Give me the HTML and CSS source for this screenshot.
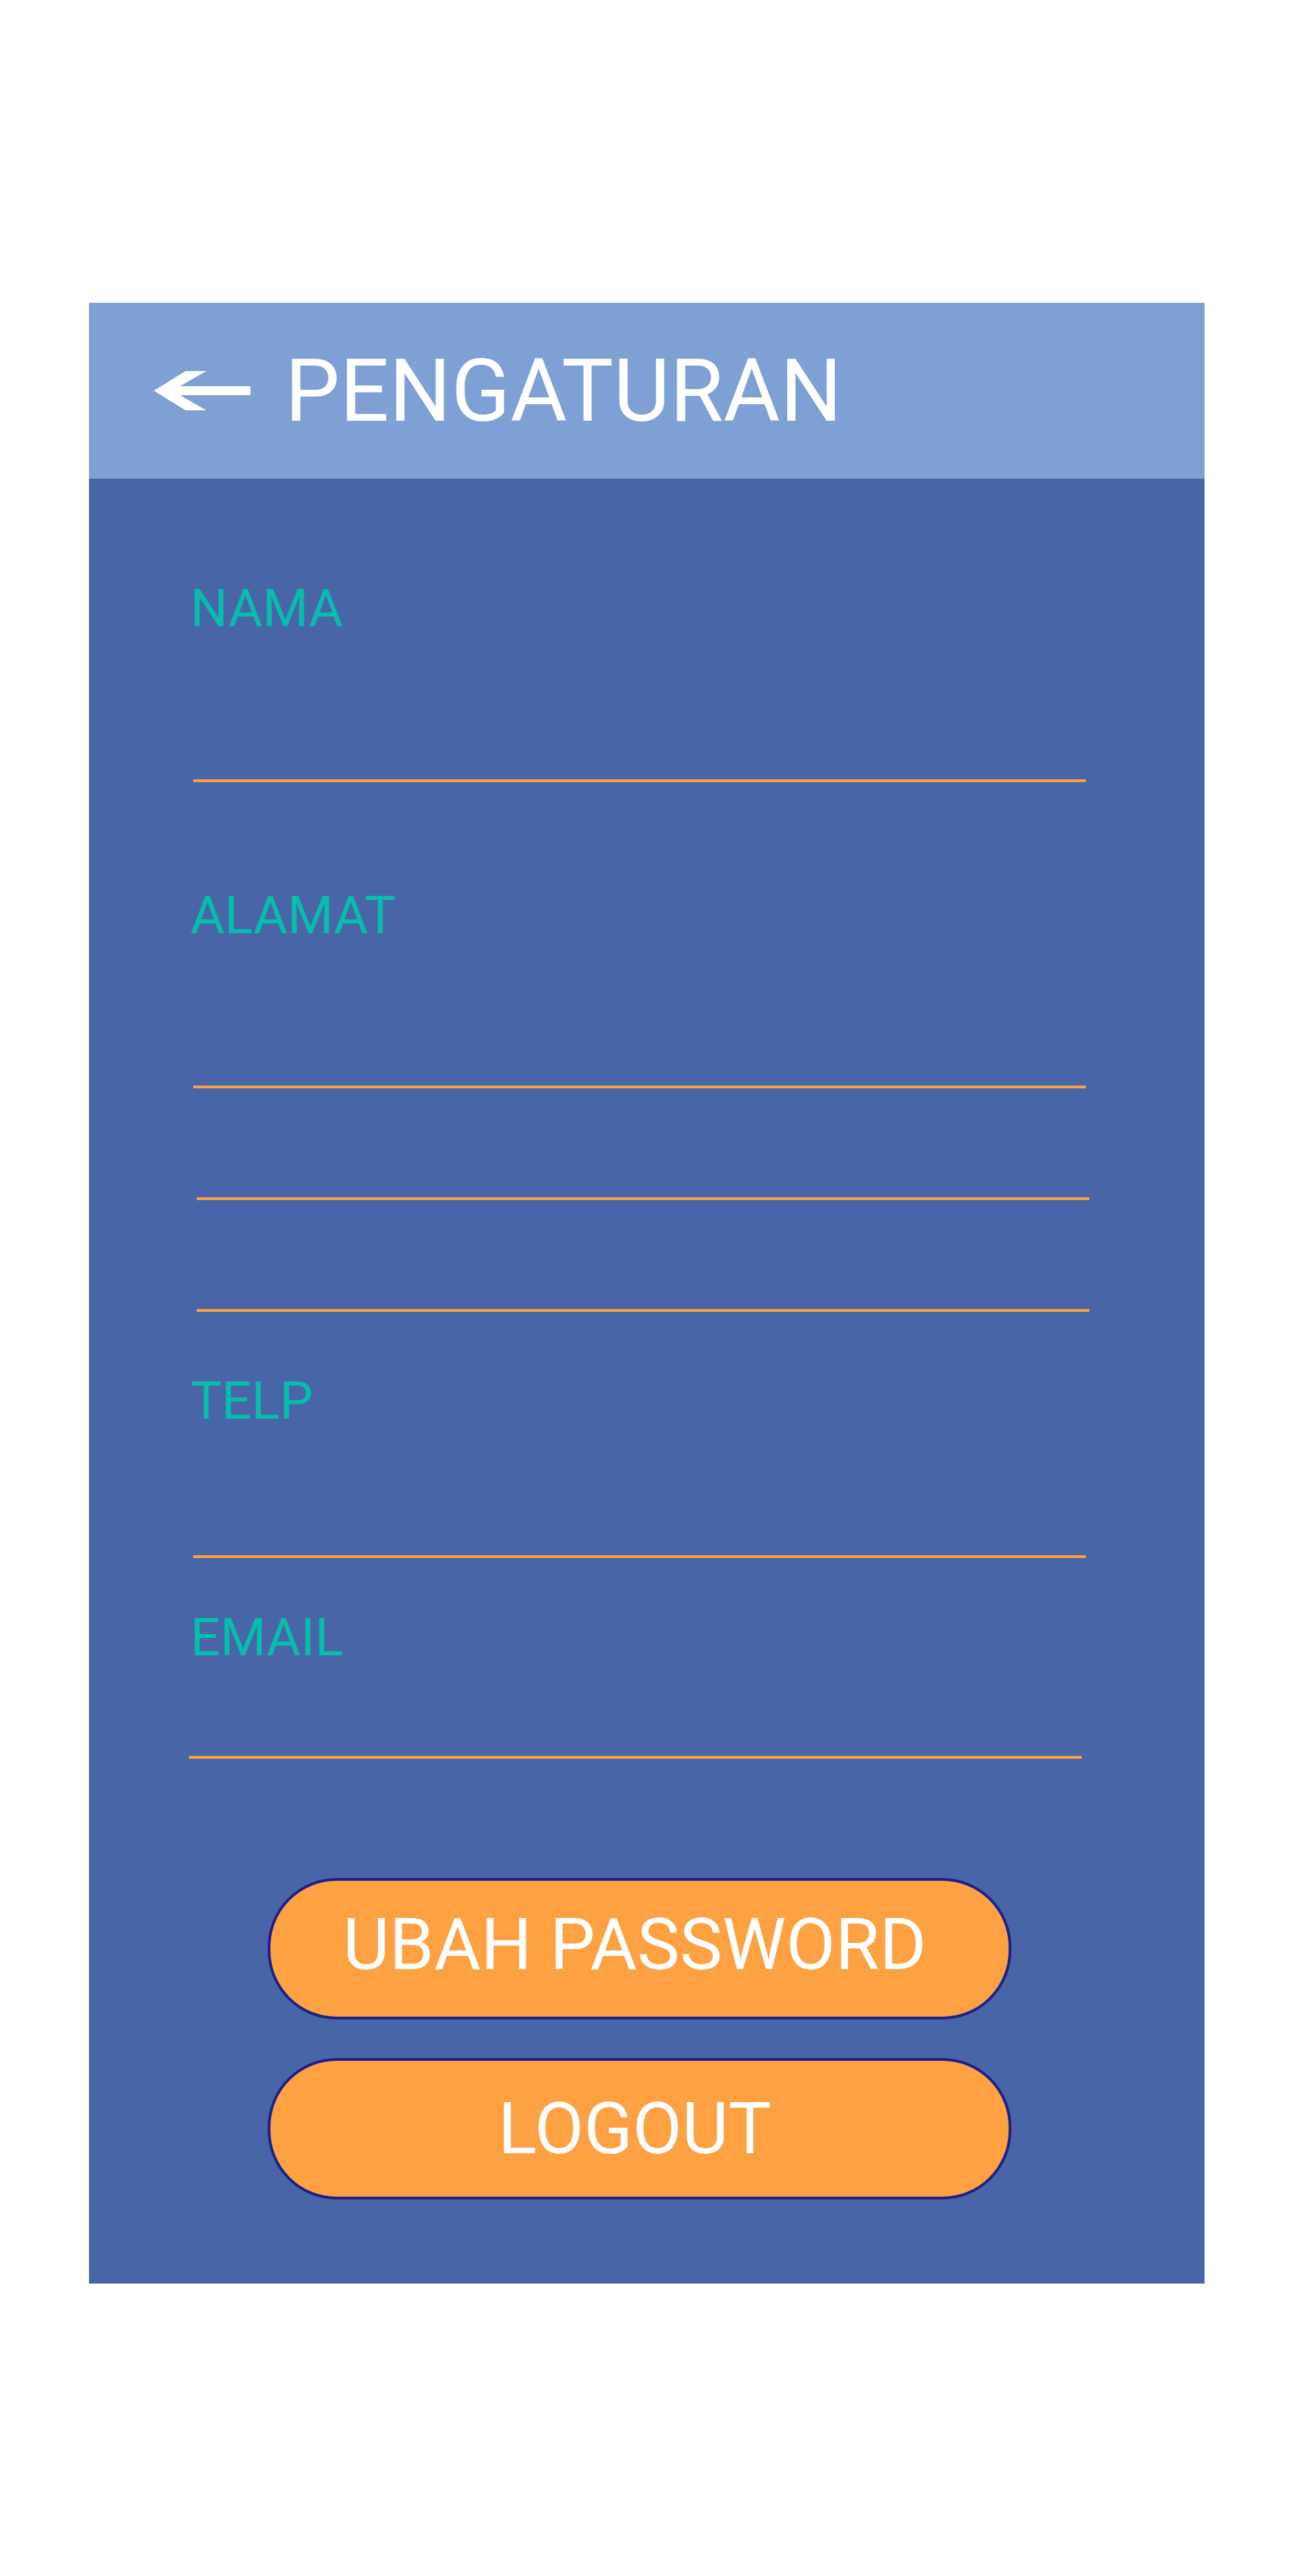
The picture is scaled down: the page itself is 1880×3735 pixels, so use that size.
FILE: index.html
```html
<!DOCTYPE html>
<html lang="id">
<head>
<meta charset="utf-8">
<title>Pengaturan</title>
<link rel="stylesheet" href="styles.css">
</head>
<body>
<div class="screen">
  <header class="topbar">
    <svg class="back" width="140" height="57" viewBox="0 0 140 57" aria-hidden="true">
      <polygon points="0,28.5 46,0 76,0 38,22 140,22 140,35 38,35 76,57 46,57" fill="#ffffff"/>
    </svg>
    <h1 class="title">PENGATURAN</h1>
  </header>
  <main class="form">
    <div class="label label-nama">NAMA</div>
    <div class="line line-nama"></div>
    <div class="label label-alamat">ALAMAT</div>
    <div class="line line-alamat"></div>
    <div class="line line-extra line-extra1"></div>
    <div class="line line-extra line-extra2"></div>
    <div class="label label-telp">TELP</div>
    <div class="line line-telp"></div>
    <div class="label label-email">EMAIL</div>
    <div class="line line-email"></div>
    <button class="btn btn-pass">UBAH PASSWORD</button>
    <button class="btn btn-logout">LOGOUT</button>
  </main>
</div>
</body>
</html>
```
FILE: styles.css
```css
html, body {
  margin: 0;
  padding: 0;
  background: #ffffff;
}
body {
  font-family: Roboto, "Liberation Sans", sans-serif;
  width: 1880px;
  min-height: 3735px;
}
.screen {
  margin-left: 129px;
  margin-top: 439px;
  width: 1617px;
  height: 2872px;
  background: #4866a7;
  display: flex;
  flex-direction: column;
}
.topbar {
  height: 255px;
  flex: 0 0 255px;
  background: #7fa0d4;
  display: flex;
  align-items: center;
  padding-left: 94px;
  box-sizing: border-box;
}
.back {
  display: block;
  flex: 0 0 auto;
}
.title {
  margin: 0 0 0 50px;
  font-weight: 400;
  font-size: 126px;
  line-height: 126px;
  color: #ffffff;
  letter-spacing: 0;
}
.form {
  display: flex;
  flex-direction: column;
  align-items: flex-start;
  padding-top: 150px;
}
.label {
  margin-left: 147px;
  font-size: 76px;
  line-height: 76px;
  height: 76px;
  color: #06bdae;
}
.label-alamat { margin-top: 155px; }
.label-telp { margin-top: 91px; }
.label-email { margin-top: 77px; }
.line {
  height: 4px;
  width: 1294px;
  background: #fea142;
  margin-left: 151px;
}
.line-nama { margin-top: 210px; }
.line-alamat { margin-top: 209px; }
.line-extra { margin-left: 156px; }
.line-extra1 { margin-top: 158px; }
.line-extra2 { margin-top: 158px; }
.line-telp { margin-top: 186px; }
.line-email { margin-top: 134px; margin-left: 145px; }
.btn {
  margin-left: 259px;
  width: 1078px;
  height: 205px;
  box-sizing: border-box;
  border: 4px solid #1e1e8c;
  border-radius: 100px;
  background: #fea143;
  color: #ffffff;
  font-family: Roboto, "Liberation Sans", sans-serif;
  font-size: 104px;
  font-weight: 400;
  line-height: 1;
  padding: 0 14px 0 0;
  text-align: center;
  cursor: pointer;
}
.btn-pass { margin-top: 173px; padding-bottom: 12px; }
.btn-logout { margin-top: 56px; }
```
